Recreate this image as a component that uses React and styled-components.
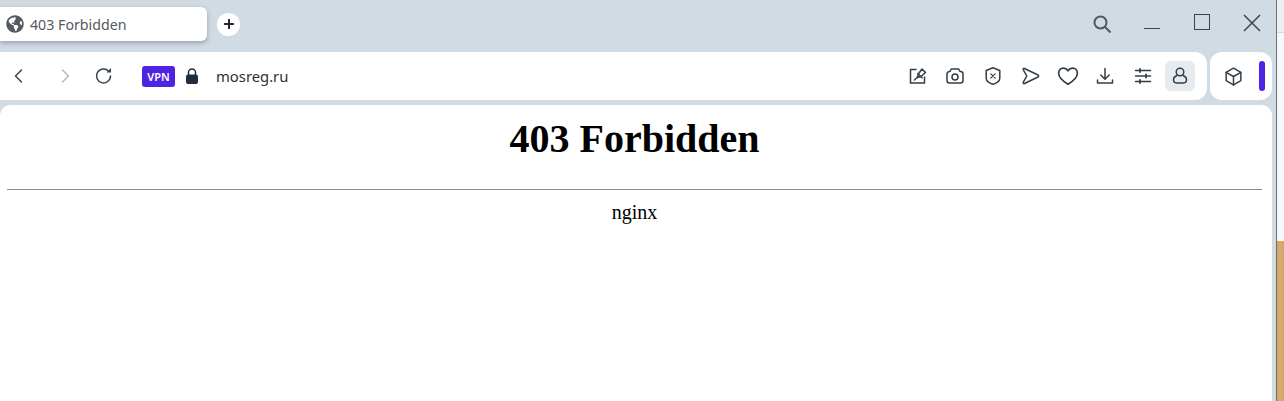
import React from 'react'
import styled, {createGlobalStyle} from 'styled-components'
import {FaGlobeAmericas} from 'react-icons/fa'

const GlobalStyle = createGlobalStyle`
  html, body { margin: 0; padding: 0; background: #d1dbe4; }
  body { width: 1284px; height: 401px; overflow: hidden; }
`

const Svg = ({size = 20, width = 1.5, children}) => (
    <svg width={size} height={size} viewBox="0 0 20 20" fill="none" stroke="currentColor"
        strokeWidth={width} strokeLinecap="round" strokeLinejoin="round">
        {children}
    </svg>
)

const toolIcons = [
    <Svg key="pin"><path d="M8 3.500H2.500v13.500h14V11"/><path d="M9.500 11.500l.8-3.500 3.700-5 3.500 3.500-4.500 4z"/><path d="M6.500 14l3.500-3.500"/><path d="M9.800 7.500l4.200 4.200"/></Svg>,
    <Svg key="camera"><path d="M5 5.500l1.300-2.500h7.400L15 5.500h.5a2.500 2.500 0 0 1 2.500 2.500v6.500a2.500 2.500 0 0 1-2.500 2.500h-11A2.500 2.500 0 0 1 2 14.500V8a2.500 2.500 0 0 1 2.500-2.500z"/><circle cx="10" cy="11" r="3"/></Svg>,
    <Svg key="shield"><path d="M10 1.800l6.800 2.700v8c0 2.700-3.800 5-6.800 5.700-3-.7-6.800-3-6.800-5.700v-8z"/><path d="M7.800 7.800l4.400 4.400M12.200 7.800l-4.400 4.400" strokeWidth="1.200"/></Svg>,
    <Svg key="send"><path d="M3.300 3.800c-.5-1 .3-1.700 1.200-1.300L18 9c.8.400.8 1.500 0 2L4.500 17.500c-.9.400-1.700-.3-1.200-1.300L6.800 10z"/></Svg>,
    <Svg key="heart" size={22}><path d="M10 17.500C5 14.500 1.500 11.500 1.500 7.500 1.500 4.500 3.500 2.800 5.700 2.800 7.500 2.800 9 3.800 10 5.300c1-1.500 2.500-2.500 4.300-2.500 2.200 0 4.200 1.700 4.200 4.700 0 4-3.500 7-8.500 10z"/></Svg>,
    <Svg key="download"><path d="M10 2.500v10.500M5.800 9l4.200 4.200L14.200 9"/><path d="M2.500 14v3h15v-3"/></Svg>,
    <Svg key="sliders"><path d="M2.500 4.500h15M2.500 10h15M2.500 15.500h15"/><path d="M7 3v3M13 8.500v3M7 14v3" strokeWidth="1.800"/></Svg>,
    <Svg key="user"><circle cx="10" cy="6" r="3.800"/><path d="M6.800 9.500C4.500 10.500 3.500 12 3.500 13.700c0 2 1.500 3.300 3.500 3.300h6c2 0 3.500-1.300 3.500-3.300 0-1.700-1-3.200-3.300-4.200"/></Svg>,
]

const App = () => {
    return (
        <Screen>
            <GlobalStyle/>
            <BrowserWindow>
                <TabBar>
                    <Tab>
                        <FaGlobeAmericas size={18} color="#555b60"/>
                        <TabTitle>403 Forbidden</TabTitle>
                    </Tab>
                    <NewTab>
                        <Svg size={14} width={2.800}><path d="M10 4v12M4 10h12"/></Svg>
                    </NewTab>
                    <WindowControls>
                        <WindowButton>
                            <svg width="20" height="20" viewBox="0 0 20 20" fill="none" stroke="#50585f" strokeWidth="2">
                                <circle cx="8.500" cy="8.500" r="6"/><path d="M13 13l5.500 5.500"/>
                            </svg>
                        </WindowButton>
                        <WindowButton>
                            <MinimizeLine/>
                        </WindowButton>
                        <WindowButton $lift={4}>
                            <MaximizeSquare/>
                        </WindowButton>
                        <WindowButton $lift={3}>
                            <svg width="18" height="18" viewBox="0 0 18 18" stroke="#3c444b" strokeWidth="1.500">
                                <path d="M1 1l16 16M17 1L1 17"/>
                            </svg>
                        </WindowButton>
                    </WindowControls>
                </TabBar>
                <ToolRow>
                    <AddressBar>
                        <NavButton $after={9}>
                            <Svg><path d="M12.500 4L6.500 10l6 6"/></Svg>
                        </NavButton>
                        <NavButton $disabled>
                            <Svg><path d="M6.500 4l6 6-6 6"/></Svg>
                        </NavButton>
                        <NavButton>
                            <Svg>
                                <path d="M16.500 10a7 7 0 1 1-2-5"/>
                                <path d="M17 2v4.500h-4.500" fill="currentColor" stroke="none"/>
                            </Svg>
                        </NavButton>
                        <VpnBadge>VPN</VpnBadge>
                        <LockIcon>
                            <svg width="14" height="17" viewBox="0 0 14 17">
                                <path d="M3.500 7V4.500a3.500 3.500 0 0 1 7 0V7" fill="none" stroke="#1f2d3a" strokeWidth="1.500"/>
                                <rect x="1" y="6.500" width="12" height="9.500" rx="2" fill="#1f2d3a"/>
                            </svg>
                        </LockIcon>
                        <Url>mosreg.ru</Url>
                        <Tools>
                            {toolIcons.map((icon, i) => (
                                <ToolButton key={i} $active={i === toolIcons.length - 1}>{icon}</ToolButton>
                            ))}
                        </Tools>
                    </AddressBar>
                    <ExtensionBar>
                        <Svg size={21} width={1.400}>
                            <path d="M10 2l7 4v8l-7 4-7-4V6z"/><path d="M3 6l7 4 7-4M10 10v8"/>
                        </Svg>
                        <AccentPill/>
                    </ExtensionBar>
                </ToolRow>
                <Content>
                    <Heading>403 Forbidden</Heading>
                    <Rule/>
                    <Server>nginx</Server>
                </Content>
            </BrowserWindow>
            <Desktop>
                <DesktopTitle/>
                <DesktopPanel/>
                <Wood/>
            </Desktop>
        </Screen>
    )
}

const Screen = styled.div`
    display: flex;
    width: 1284px;
    height: 401px;
    overflow: hidden;
`
const BrowserWindow = styled.div`
    display: flex;
    flex-direction: column;
    flex: 0 0 1277px;
    padding-right: 4px;
    box-sizing: border-box;
    background: #d1dbe4;
    border-right: 1px solid #6d7175;
`
const TabBar = styled.div`
    display: flex;
    align-items: center;
    height: 52px;
    flex: none;
`
const Tab = styled.div`
    display: flex;
    align-items: center;
    gap: 6px;
    box-sizing: border-box;
    width: 207px;
    height: 34px;
    margin-top: -4px;
    padding-left: 6px;
    background: #fff;
    border-radius: 0 6px 6px 0;
    box-shadow: 0 2px 5px rgba(60, 70, 85, 0.4);
`
const TabTitle = styled.span`
    font: 14.200px "Noto Sans", sans-serif;
    color: #54595f;
`
const NewTab = styled.div`
    display: flex;
    align-items: center;
    justify-content: center;
    width: 23px;
    height: 23px;
    margin: -4px 0 0 10px;
    border-radius: 50%;
    background: #fff;
    color: #22282e;
`
const WindowControls = styled.div`
    display: flex;
    align-items: center;
    margin-left: auto;
    margin-right: -5px;
    margin-top: -4px;
`
const WindowButton = styled.div`
    display: flex;
    align-items: center;
    justify-content: center;
    width: 50px;
    height: 30px;
    padding-bottom: ${p => p.$lift || 0}px;
    box-sizing: border-box;
`
const MinimizeLine = styled.div`
    width: 16px;
    height: 1px;
    margin-top: 9px;
    background: #3c444b;
`
const MaximizeSquare = styled.div`
    width: 16px;
    height: 16px;
    box-sizing: border-box;
    border: 1.500px solid #3c444b;
`
const ToolRow = styled.div`
    display: flex;
    gap: 3px;
    height: 48px;
    flex: none;
`
const AddressBar = styled.div`
    display: flex;
    align-items: center;
    box-sizing: border-box;
    width: 1207px;
    padding-right: 8px;
    background: #fff;
    border-radius: 0 12px 12px 0;
`
const NavButton = styled.div`
    display: flex;
    align-items: center;
    justify-content: center;
    flex: 0 0 38px;
    margin-right: ${p => p.$after || 0}px;
    color: ${p => (p.$disabled ? '#b4bbc2' : '#39434c')};
`
const VpnBadge = styled.div`
    display: flex;
    align-items: center;
    justify-content: center;
    width: 33px;
    height: 21px;
    margin-left: 19px;
    border-radius: 3px;
    background: #4f23e2;
    color: #fff;
    font: 600 11px "Noto Sans", sans-serif;
`
const LockIcon = styled.div`
    display: flex;
    margin-left: 10px;
`
const Url = styled.div`
    margin-left: 17px;
    font: 14.800px "Noto Sans", sans-serif;
    color: #2b3137;
`
const Tools = styled.div`
    display: flex;
    align-items: center;
    margin-left: auto;
`
const ToolButton = styled.div`
    position: relative;
    display: flex;
    align-items: center;
    justify-content: center;
    width: 37.500px;
    height: 30px;
    color: #333d46;
    z-index: 0;
    &::before {
        content: ${p => (p.$active ? '""' : 'none')};
        position: absolute;
        inset: 0 3.750px;
        border-radius: 6px;
        background: #e6ebf0;
        z-index: -1;
    }
`
const ExtensionBar = styled.div`
    display: flex;
    align-items: center;
    box-sizing: border-box;
    width: 62px;
    padding-left: 13px;
    gap: 15px;
    background: #fff;
    border-radius: 12px;
    color: #333d46;
`
const AccentPill = styled.div`
    width: 6px;
    height: 30px;
    border-radius: 3px;
    background: #4f23e2;
`
const Content = styled.div`
    flex: 1;
    margin-top: 5px;
    padding: 0 10px 0 7px;
    background: #fff;
    border-radius: 10px 10px 0 0;
    font-family: "Liberation Serif", serif;
    color: #000;
    text-align: center;
`
const Heading = styled.h1`
    margin: 11px 0 0;
    font-size: 40px;
    line-height: 46px;
    font-weight: 700;
`
const Rule = styled.hr`
    margin: 27px 0 0;
    height: 1px;
    border: 0;
    background: #8e8e8e;
`
const Server = styled.div`
    margin-top: 11px;
    font-size: 20px;
    line-height: 23px;
`
const Desktop = styled.div`
    display: flex;
    flex-direction: column;
    flex: 1;
`
const DesktopTitle = styled.div`
    height: 32px;
    background: #eceeef;
    border-bottom: 1px solid #d8dadc;
`
const DesktopPanel = styled.div`
    height: 208px;
    background: #f7f8f9;
`
const Wood = styled.div`
    flex: 1;
    background: linear-gradient(90deg, #cfa164, #d8ab6e 40%, #d4a66a);
`

export default App
